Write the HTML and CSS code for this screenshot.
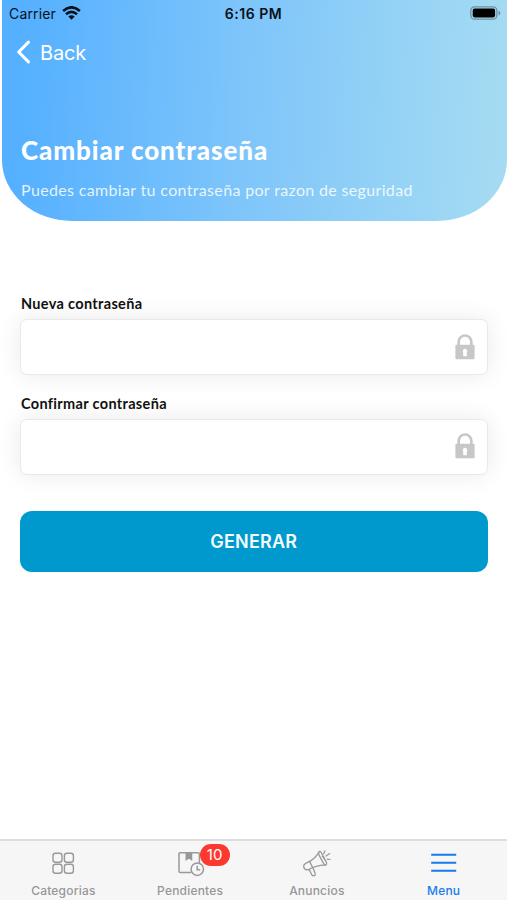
FILE: index.html
```html
<!DOCTYPE html>
<html lang="es">
<head>
<meta charset="utf-8">
<meta name="viewport" content="width=device-width">
<title>Cambiar contraseña</title>
<link rel="stylesheet" href="styles.css">
</head>
<body>
<div class="screen">
  <header class="hero">
    <div class="status">
      <div class="network"><span class="carrier">Carrier</span>
        <svg class="wifi" width="19" height="14" viewBox="0 0 19 14"><g fill="none" stroke="#07111a" stroke-width="2.6"><path d="M1.1 4.9Q9.5-2.3 17.9 4.9"/><path d="M4 8.2Q9.5 3.5 15 8.2"/></g><path d="M6.3 10.6Q9.5 8 12.7 10.6L9.5 13.8Z" fill="#07111a"/></svg>
      </div>
      <span class="time">6:16 PM</span>
      <svg class="battery" width="31" height="14" viewBox="0 0 31 14"><rect x=".8" y=".8" width="26" height="12.4" rx="3.6" fill="none" stroke="#6f91a2" stroke-width="1.3"/><rect x="2.7" y="2.6" width="22.4" height="8.8" rx="1.8" fill="#000"/><path d="M28.5 4.6Q30.4 5.3 30.4 7T28.5 9.4Z" fill="#6f91a2"/></svg>
    </div>
    <div class="back">
      <svg width="15" height="24" viewBox="0 0 15 24"><path d="M12.5 2.2L2.7 12l9.8 9.8" fill="none" stroke="#fff" stroke-width="3.1" stroke-linecap="round" stroke-linejoin="round"/></svg>
      <span class="back-label">Back</span>
    </div>
    <h1>Cambiar contraseña</h1>
    <p class="subtitle">Puedes cambiar tu contraseña por razon de seguridad</p>
  </header>
  <main class="form">
    <div class="label label-new">Nueva contraseña</div>
    <div class="field">
      <svg width="20" height="26" viewBox="0 0 20 26"><path d="M3.7 12V7.8a6.3 6.3 0 0 1 12.6 0V12" fill="none" stroke="#c7c7c7" stroke-width="2.7"/><rect x=".4" y="10.8" width="19.2" height="14.4" rx="1" fill="#c7c7c7"/><path d="M8.2 22.2v-3.7a2.3 2.3 0 1 1 3.6 0v3.7Z" fill="#fff"/></svg>
    </div>
    <div class="label label-confirm">Confirmar contraseña</div>
    <div class="field">
      <svg class="lock-low" width="20" height="26" viewBox="0 0 20 26"><path d="M3.7 12V7.8a6.3 6.3 0 0 1 12.6 0V12" fill="none" stroke="#c7c7c7" stroke-width="2.7"/><rect x=".4" y="10.8" width="19.2" height="14.4" rx="1" fill="#c7c7c7"/><path d="M8.2 22.2v-3.7a2.3 2.3 0 1 1 3.6 0v3.7Z" fill="#fff"/></svg>
    </div>
    <button class="submit">GENERAR</button>
  </main>
  <nav class="tabs">
    <div class="tab">
      <svg width="30" height="30" viewBox="0 0 30 30" fill="none" stroke="#999" stroke-width="1.4"><rect x="5" y="4.3" width="9" height="9" rx="2.5"/><rect x="16.4" y="4.3" width="9" height="9" rx="2.5"/><rect x="5" y="15.2" width="9" height="9" rx="2.5"/><rect x="16.4" y="15.2" width="9" height="9" rx="2.5"/></svg>
      <span>Categorias</span>
    </div>
    <div class="tab">
      <svg width="30" height="30" viewBox="0 0 30 30" fill="none" stroke="#999" stroke-width="1.5"><path d="M16 23.5H5.2a1.2 1.2 0 0 1-1.2-1.2V5a1.2 1.2 0 0 1 1.2-1.2h18A1.2 1.2 0 0 1 24.4 5v9"/><path d="M11.3 4.2h5.2v6.3l-2.6-1.8-2.6 1.8Z" fill="#999"/><circle cx="22.3" cy="20.2" r="6.2" fill="#f6f6f6"/><path d="M22.2 16.7v4h3"/></svg>
      <b class="badge">10</b>
      <span>Pendientes</span>
    </div>
    <div class="tab">
      <svg width="30" height="30" viewBox="0 0 30 30" fill="none" stroke="#999" stroke-width="1.25" stroke-linejoin="round" stroke-linecap="round"><path d="M16.8 3.4Q12.4 11 4.6 13.8Q1.3 15.2 1.7 18Q2.8 21.3 6 20.9Q15 16 23 16.2"/><path d="M16.8 3.4Q17.6 1.6 19 3.2L24.5 13.6Q25.2 15.8 23 16.2Q21.8 15.4 17.2 6.4Q16.3 4.6 16.8 3.4Z"/><path d="M7.6 12.4l3.2 6.5M7.2 20.6l2.7 5.4q1.5 1.4 3 .2.9-.8.2-2l-2-5.1M20.3 7.6q2.2.4 1.9 2.6M21.7 4.8l1.2-2.9M24 7l3.7-2.4M25.2 10.1l2.8.4"/></svg>
      <span>Anuncios</span>
    </div>
    <div class="tab active">
      <svg width="30" height="30" viewBox="0 0 30 30"><path d="M2.2 5.8h25M2.2 13.8h25M2.2 21.8h25" stroke="#197bea" stroke-width="2.1"/></svg>
      <span>Menu</span>
    </div>
  </nav>
</div>
</body>
</html>
```
FILE: styles.css
```css
* { box-sizing: border-box; }
body { margin: 0; background: #fff; font-family: Inter, sans-serif; }
.screen { width: 507px; height: 900px; display: flex; flex-direction: column; overflow: hidden; }
.hero {
  height: 221px; margin-left: 2px; padding-left: 19px; color: #fff; flex: none;
  background: linear-gradient(93deg, #55b0ff 4%, #80c6fa 50%, #a6dcf2 100%);
  border-radius: 0 0 70px 70px / 0 0 61px 61px;
}
.status { height: 28px; margin-left: -19px; padding: 0 6px 2px 7px; display: grid; grid-template-columns: 1fr auto 1fr; align-items: center; color: #07111a; }
.network { display: flex; align-items: center; gap: 6px; }
.carrier { font-size: 14px; letter-spacing: 0.15px; }
.wifi { margin-top: -1px; }
.time { font-size: 14px; font-weight: 600; letter-spacing: 0.5px; margin-left: -3px; }
.battery { justify-self: end; }
.back { display: flex; align-items: center; height: 48px; margin-left: -5px; gap: 9px; }
.back-label { font-size: 20px; letter-spacing: -0.2px; padding-top: 1px; }
h1 { margin: 59px 0 0; height: 32px; font: 900 26px/31px Lato, sans-serif; letter-spacing: 0.9px; white-space: nowrap; }
.subtitle { margin: 11px 0 0; font: 400 16px/23px Lato, sans-serif; letter-spacing: 0.34px; color: rgba(255,255,255,.85); white-space: nowrap; }
.form { flex: 1; padding: 72px 19px 0 20px; }
.label { height: 26px; padding-left: 1px; font: 700 14.5px/21px Lato, sans-serif; letter-spacing: 0.33px; color: #111; white-space: nowrap; }
.label-confirm { margin-top: 18px; }
.field {
  height: 56px; display: flex; align-items: center; justify-content: flex-end; padding-right: 12px;
  background: #fff; border: 1px solid #e9e9e9; border-radius: 7px; box-shadow: 0 0 24px rgba(0,0,0,.085);
}
.lock-low { margin-top: -2px; }
.submit { display: block; width: 467.5px; height: 61px; margin: 36px 0 0; padding: 0; border: 0; border-radius: 12px; background: #0099ce; color: #f3fcff; font: 600 18px/61px Inter, sans-serif; letter-spacing: 0.2px; }
.tabs { height: 61px; flex: none; display: grid; grid-template-columns: repeat(4, 1fr); background: #f6f6f6; border-top: 2px solid #dedede; }
.tab { display: flex; flex-direction: column; align-items: center; padding-top: 8px; color: #979797; font-size: 12px; line-height: 16px; letter-spacing: 0.2px; position: relative; font-weight: 500; }
.tab span { margin-top: 4px; }
.active { color: #197bea; }
.badge { position: absolute; left: 73px; top: 3px; width: 30px; height: 22px; border-radius: 11px; background: #fb392f; color: #fff; text-align: center; font-size: 15px; line-height: 22px; font-weight: 400; }
```
